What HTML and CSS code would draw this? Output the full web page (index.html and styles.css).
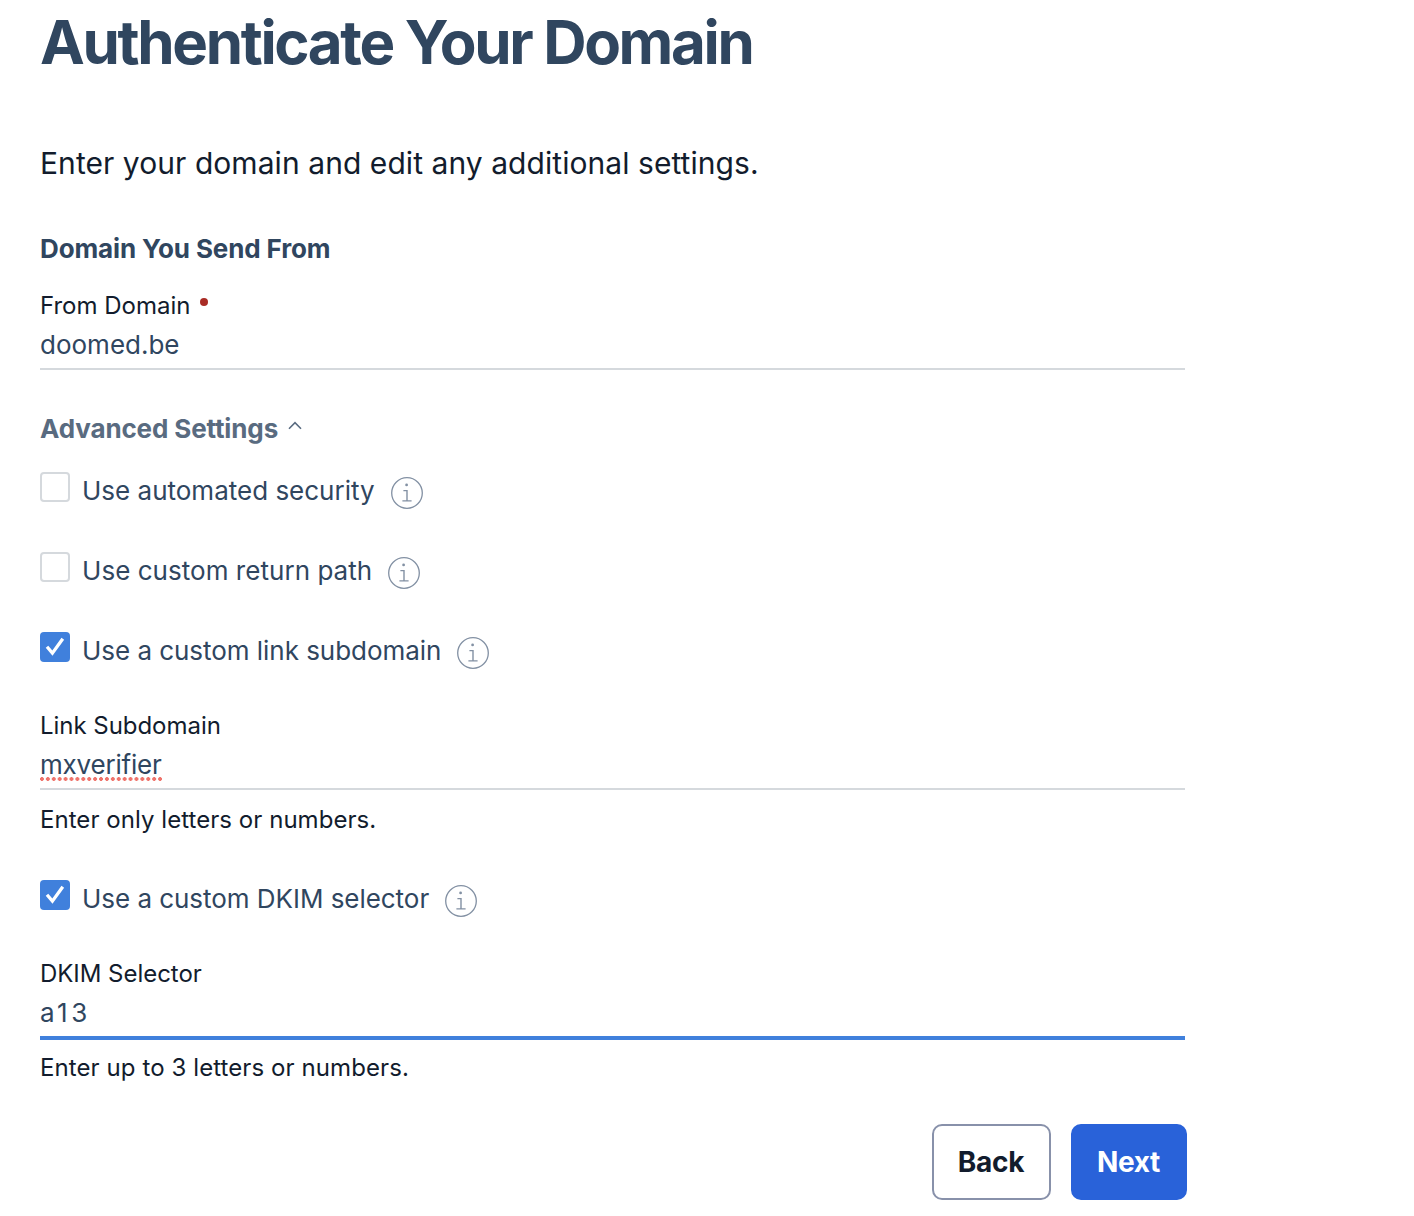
FILE: index.html
```html
<!DOCTYPE html>
<html lang="en">
<head>
<meta charset="utf-8">
<title>Authenticate Your Domain</title>
<link rel="stylesheet" href="styles.css">
</head>
<body>
<svg class="sprite" aria-hidden="true">
  <symbol id="info" viewBox="0 0 32 32">
    <circle cx="16" cy="16" r="15.3" fill="none" stroke="currentColor" stroke-width="1.3"/>
    <circle cx="15.6" cy="7.9" r="1.4" fill="currentColor"/>
    <path d="M12.4 13.6H16v10.3M11.4 23.9h9.2" fill="none" stroke="currentColor" stroke-width="1.4"/>
  </symbol>
  <symbol id="check" viewBox="0 0 30 30">
    <path d="M7 14.8l5.4 6.3L22.8 6.8" fill="none" stroke="#fff" stroke-width="3.3"/>
  </symbol>
</svg>
<main class="page">
  <h1 class="title">Authenticate Your Domain</h1>
  <p class="intro">Enter your domain and edit any additional settings.</p>

  <h2 class="section-title">Domain You Send From</h2>
  <div class="field">
    <div class="label">From Domain <span class="required"></span></div>
    <div class="value">doomed.be</div>
  </div>

  <h2 class="section-title advanced">Advanced Settings
    <svg class="caret" viewBox="0 0 14 9"><path d="M1 7.7L7 1.6l6 6.1" fill="none" stroke="currentColor" stroke-width="1.6"/></svg>
  </h2>
  <div class="option">
    <span class="box"></span><span class="option-text">Use automated security</span>
    <svg class="info"><use href="#info"/></svg>
  </div>
  <div class="option">
    <span class="box"></span><span class="option-text return-path">Use custom return path</span>
    <svg class="info"><use href="#info"/></svg>
  </div>
  <div class="option">
    <span class="box checked"><svg class="tick"><use href="#check"/></svg></span><span class="option-text compact">Use a custom link subdomain</span>
    <svg class="info"><use href="#info"/></svg>
  </div>
  <div class="field nested">
    <div class="label compact">Link Subdomain</div>
    <div class="value"><span class="misspelled">mxverifier</span></div>
    <div class="help">Enter only letters or numbers.</div>
  </div>
  <div class="option">
    <span class="box checked"><svg class="tick"><use href="#check"/></svg></span><span class="option-text compact">Use a custom DKIM selector</span>
    <svg class="info"><use href="#info"/></svg>
  </div>
  <div class="field nested">
    <div class="label compact">DKIM Selector</div>
    <div class="value focused">a13</div>
    <div class="help wide">Enter up to 3 letters or numbers.</div>
  </div>

  <div class="actions">
    <button class="btn back">Back</button>
    <button class="btn next">Next</button>
  </div>
</main>
</body>
</html>
```

FILE: styles.css
```css
* { box-sizing: border-box; }

body {
  margin: 0;
  background: #fff;
  color: #121c2d;
  font-family: Inter, "Liberation Sans", sans-serif;
}

.sprite { display: none; }

.page {
  width: 1187px;
  height: 1216px;
  padding: 6px 0 0 40px;
}

h1, h2, p { margin: 0; }

.title {
  font-size: 60px;
  line-height: 72px;
  font-weight: 700;
  letter-spacing: -2.33px;
  color: #30465f;
}

.intro {
  margin-top: 65px;
  font-size: 30px;
  line-height: 40px;
  letter-spacing: 0.06px;
}

.section-title {
  display: flex;
  align-items: center;
  margin-top: 46px;
  font-size: 26px;
  line-height: 40px;
  font-weight: 700;
  letter-spacing: -0.13px;
  color: #30465f;
}

.advanced {
  margin: 39px 0 23px;
  color: #596b80;
}

.caret {
  width: 14px;
  height: 9px;
  margin: -7px 0 0 10px;
}

.field {
  width: 1145px;
  margin-top: 22px;
}

.field.nested { margin: -1px 0 45px; }

.label {
  display: flex;
  align-items: center;
  font-size: 24px;
  line-height: 30px;
}

.compact { letter-spacing: -0.04px; }

.required {
  width: 8px;
  height: 8px;
  margin: -8px 0 0 10px;
  border-radius: 50%;
  background: #a92c25;
}

.value {
  height: 49px;
  border-bottom: 2px solid #d5d9dd;
  font-size: 26px;
  line-height: 47px;
  color: #30465f;
}

.value.focused {
  height: 51px;
  margin-bottom: -2px;
  border-bottom: 4px solid #4080dc;
  letter-spacing: 3.5px;
}

.misspelled {
  display: inline-block;
  height: 40px;
  letter-spacing: -0.2px;
  background: radial-gradient(circle, #ef746c 1.6px, transparent 2.2px) -1px 100% / 5.92px 4px repeat-x;
}

.help {
  margin-top: 15px;
  font-size: 24px;
  line-height: 30px;
  letter-spacing: 0.05px;
}

.help.wide { letter-spacing: 0.09px; }

.option {
  display: flex;
  align-items: flex-start;
  height: 80px;
}

.box {
  width: 30px;
  height: 30px;
  margin-right: 12px;
  border: 2px solid #d5d9dd;
  border-radius: 4px;
}

.box.checked {
  border: 0;
  background: #4080dc;
}

.tick {
  display: block;
  width: 30px;
  height: 30px;
}

.option-text {
  font-size: 26px;
  line-height: 37px;
  color: #30465f;
}

.return-path { letter-spacing: 0.04px; }

.info {
  width: 32px;
  height: 32px;
  margin: 4.5px 0 0 16px;
  color: #8290a3;
}

.actions {
  display: flex;
  justify-content: flex-end;
  gap: 20px;
  margin-top: -4px;
}

.btn {
  height: 76px;
  padding: 0 1px 0 0;
  border-radius: 10px;
  font: 700 28px/72px Inter, "Liberation Sans", sans-serif;
  letter-spacing: -0.3px;
}

.back {
  width: 119px;
  border: 2px solid #8891aa;
  background: #fff;
  color: #121c2d;
}

.next {
  width: 116px;
  border: 2px solid #2962d9;
  background: #2962d9;
  color: #fff;
}
```
